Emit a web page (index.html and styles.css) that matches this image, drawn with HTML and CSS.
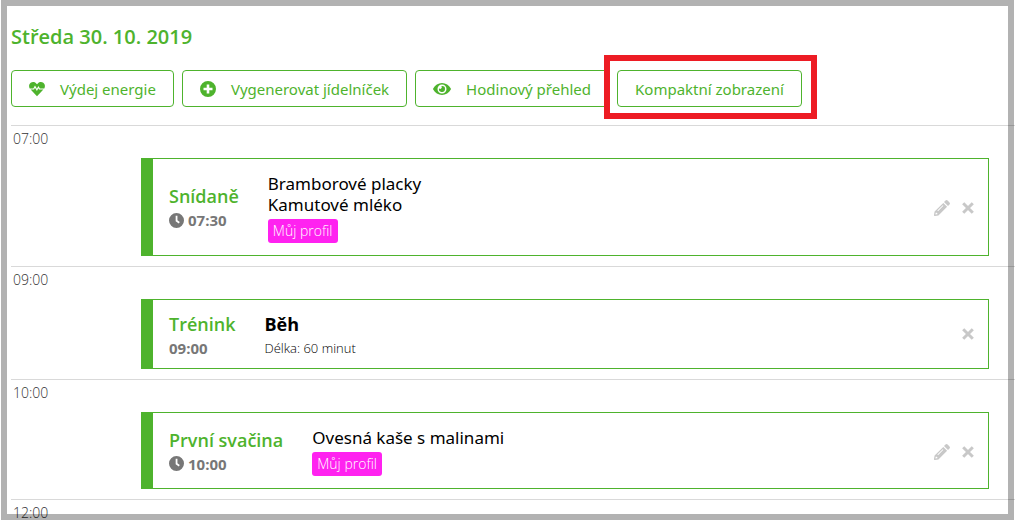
FILE: index.html
```html
<!DOCTYPE html>
<html lang="cs">
<head>
  <meta charset="UTF-8">
  <meta name="viewport" content="width=device-width, initial-scale=1.0">
  <title>Jídelníček - Středa 30. 10. 2019</title>
  <link rel="stylesheet" href="styles.css">
</head>
<body>
  <!-- Shared icons -->
  <svg class="sprite" aria-hidden="true">
    <symbol id="icon-heart" viewBox="0 0 16 16">
      <path fill="currentColor" d="M8 15.200 1.600 8.600h3.400l1-1.900 1.900 3.300 1.500-2.700.7 1.300h4.300L8 15.200zM.7 7.400C-.4 5.200 0 3 1.700 1.800c1.800-1.300 4-.9 5.500.6l.8.8.8-.8c1.500-1.500 3.700-1.900 5.500-.6 1.700 1.200 2.100 3.400 1 5.600h-4.400L9.400 5 7.900 7.800 6 4.500 4.300 7.400z"/>
    </symbol>
    <symbol id="icon-plus" viewBox="0 0 16 16">
      <path fill="currentColor" fill-rule="evenodd" d="M8 0a8 8 0 1 0 0 16A8 8 0 0 0 8 0zM6.700 3.500h2.600v3.200h3.200v2.600H9.300v3.200H6.700V9.300H3.500V6.700h3.200z"/>
    </symbol>
    <symbol id="icon-eye" viewBox="0 0 18 14">
      <path fill="currentColor" fill-rule="evenodd" d="M9 1C5.200 1 2 3.100.2 6.500a1 1 0 0 0 0 1C2 10.900 5.200 13 9 13s7-2.100 8.800-5.500a1 1 0 0 0 0-1C16 3.100 12.800 1 9 1zM9 2.500a4.500 4.500 0 1 1 0 9 4.500 4.500 0 0 1 0-9z"/>
      <path fill="currentColor" d="M9 4a3 3 0 1 1-2.900 2.200A1.500 1.500 0 1 0 8.200 4.100 3 3 0 0 1 9 4z"/>
    </symbol>
    <symbol id="icon-clock" viewBox="0 0 16 16">
      <path fill="currentColor" fill-rule="evenodd" d="M8 0a8 8 0 1 0 0 16A8 8 0 0 0 8 0zM7.100 3h1.900v4.800l2.500 1.900-1.100 1.500-3.300-2.500z"/>
    </symbol>
    <symbol id="icon-pencil" viewBox="0 0 16 16">
      <path fill="currentColor" fill-rule="evenodd" d="M9.300 2.900l3.800 3.800-8.700 8.700-3.500.6a.8.8 0 0 1-.9-.9l.6-3.500zM8.800 5.200l-5.400 5.400.6.600 5.400-5.400zM1.700 12.700l-.3 1.900 1.900-.3v-1.200H2.900v-.4zM15.500 2.500a1.600 1.600 0 0 1 0 2.100L14 6.100l-4-4L11.500.500a1.600 1.600 0 0 1 2.100 0z"/>
    </symbol>
    <symbol id="icon-cross" viewBox="0 0 12 12">
      <path fill="none" stroke="currentColor" stroke-width="3" d="M1.200 1.200l9.600 9.600M10.800 1.200l-9.600 9.600"/>
    </symbol>
  </svg>

  <header class="day-header">
    <h1>Středa 30. 10. 2019</h1>
    <div class="toolbar">
      <button type="button" class="btn"><svg class="icon"><use href="#icon-heart"/></svg>Výdej energie</button>
      <button type="button" class="btn"><svg class="icon"><use href="#icon-plus"/></svg>Vygenerovat jídelníček</button>
      <button type="button" class="btn"><svg class="icon icon-wide"><use href="#icon-eye"/></svg>Hodinový přehled</button>
      <div class="highlighted">
        <button type="button" class="btn">Kompaktní zobrazení</button>
      </div>
    </div>
  </header>

  <main class="timeline">
    <section class="hour">
      <div class="hour-label">07:00</div>
      <article class="card">
        <div class="card-title">
          <h2>Snídaně</h2>
          <div class="card-time"><svg class="icon"><use href="#icon-clock"/></svg>07:30</div>
        </div>
        <div class="card-content">
          <div class="food">Bramborové placky</div>
          <div class="food">Kamutové mléko</div>
          <span class="badge">Můj profil</span>
        </div>
        <div class="card-actions">
          <button type="button" aria-label="Upravit"><svg class="pencil"><use href="#icon-pencil"/></svg></button>
          <button type="button" aria-label="Smazat"><svg class="cross"><use href="#icon-cross"/></svg></button>
        </div>
      </article>
    </section>

    <section class="hour">
      <div class="hour-label">09:00</div>
      <article class="card training">
        <div class="card-title">
          <h2>Trénink</h2>
          <div class="card-time">09:00</div>
        </div>
        <div class="card-content">
          <div class="activity">Běh</div>
          <div class="duration">Délka: 60 minut</div>
        </div>
        <div class="card-actions">
          <button type="button" aria-label="Smazat"><svg class="cross"><use href="#icon-cross"/></svg></button>
        </div>
      </article>
    </section>

    <section class="hour">
      <div class="hour-label">10:00</div>
      <article class="card">
        <div class="card-title">
          <h2>První svačina</h2>
          <div class="card-time"><svg class="icon"><use href="#icon-clock"/></svg>10:00</div>
        </div>
        <div class="card-content">
          <div class="food">Ovesná kaše s malinami</div>
          <span class="badge">Můj profil</span>
        </div>
        <div class="card-actions">
          <button type="button" aria-label="Upravit"><svg class="pencil"><use href="#icon-pencil"/></svg></button>
          <button type="button" aria-label="Smazat"><svg class="cross"><use href="#icon-cross"/></svg></button>
        </div>
      </article>
    </section>

    <section class="hour">
      <div class="hour-label">12:00</div>
    </section>
  </main>

  <div class="frame"></div>
</body>
</html>
```

FILE: styles.css
```css
* {
  box-sizing: border-box;
}

body {
  margin: 0;
  height: 100vh;
  overflow: hidden;
  position: relative;
  font-family: "Open Sans", "Noto Sans", sans-serif;
  font-size: 15px;
  background-color: #fff;
  color: #000;
}

.sprite {
  display: none;
}

h1,
h2 {
  margin: 0;
  font-weight: 600;
  color: #4eb32d;
}

/* Header */
.day-header {
  padding: 21px 11px 18px;
}

h1 {
  font-size: 20px;
  line-height: 32px;
  margin-bottom: 17px;
}

.toolbar {
  display: flex;
  gap: 8px;
}

.btn {
  display: flex;
  align-items: center;
  gap: 15px;
  height: 37px;
  padding: 0 17px;
  font-family: "Noto Sans", sans-serif;
  font-size: 15px;
  white-space: nowrap;
  color: #4eb32d;
  background-color: #fff;
  border: 1px solid #4eb32d;
  border-radius: 4px;
  cursor: pointer;
}

.icon {
  width: 16px;
  height: 16px;
  flex: none;
}

.icon-wide {
  width: 18px;
  height: 14px;
}

.highlighted {
  position: relative;
}

.highlighted::after {
  content: "";
  position: absolute;
  inset: -15px -15px -12px -13px;
  border: 6px solid #ed1c24;
  pointer-events: none;
}

/* Timeline */
.timeline {
  margin-left: 11px;
}

.hour {
  border-top: 1px solid #d9d9d9;
  padding: 2px 26px 10px 2px;
}

.hour-label {
  font-size: 14px;
  font-weight: 300;
  line-height: 22px;
  color: #333;
}

.card {
  display: flex;
  align-items: center;
  margin: 8px 0 0 128px;
  padding: 14px 14px 12px 16px;
  border: 1px solid #4eb32d;
  border-left-width: 12px;
}

.card-title {
  margin-right: 29px;
}

.card-title h2 {
  font-size: 18px;
  line-height: 24px;
}

.card-time {
  display: flex;
  align-items: center;
  gap: 4px;
  font-size: 15px;
  font-weight: 700;
  line-height: 24px;
  color: #777;
}

.card-time .icon {
  width: 15px;
  height: 15px;
}

.card-content {
  flex: 1;
}

.food {
  font-family: "Noto Sans", sans-serif;
  font-size: 17px;
  line-height: 21px;
}

.badge {
  display: block;
  width: fit-content;
  margin-top: 4px;
  padding: 0 5px;
  font-size: 14px;
  font-weight: 300;
  line-height: 24px;
  color: #fff;
  background-color: #ff22f0;
  border-radius: 3px;
}

.training {
  padding-top: 8px;
  padding-bottom: 8px;
}

.training .card-title,
.training .card-content {
  padding-top: 4px;
}

.activity {
  font-size: 18px;
  font-weight: 700;
  line-height: 24px;
}

.duration {
  font-size: 13px;
  font-weight: 300;
  line-height: 24px;
}

.card-actions {
  display: flex;
  align-items: center;
  gap: 12px;
}

.card-actions button {
  display: flex;
  padding: 0;
  border: none;
  background: none;
  color: #c8c8c8;
  cursor: pointer;
}

.pencil {
  width: 16px;
  height: 16px;
}

.cross {
  width: 12px;
  height: 12px;
}

/* Grey window frame laid over the page */
.frame {
  position: absolute;
  inset: 0 1px 1px;
  border: 6px solid rgba(0, 0, 0, 0.3);
  pointer-events: none;
}
```
